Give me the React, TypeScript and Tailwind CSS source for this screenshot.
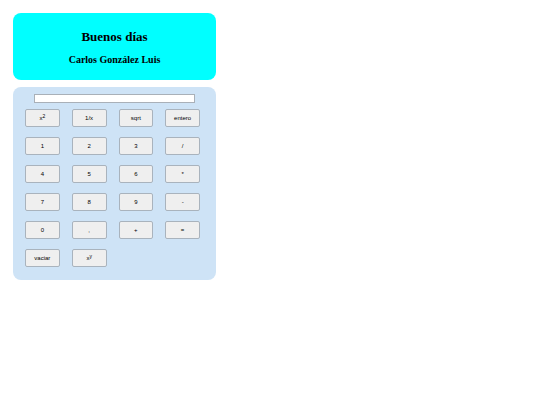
import { useState, type ReactNode } from "react";

type Key = {
  id: string;
  label: ReactNode;
};

const keys: Key[] = [
  { id: "square", label: <>x<sup className="text-[5px]">2</sup></> },
  { id: "inverse", label: "1/x" },
  { id: "sqrt", label: "sqrt" },
  { id: "int", label: "entero" },
  { id: "1", label: "1" },
  { id: "2", label: "2" },
  { id: "3", label: "3" },
  { id: "/", label: "/" },
  { id: "4", label: "4" },
  { id: "5", label: "5" },
  { id: "6", label: "6" },
  { id: "*", label: "*" },
  { id: "7", label: "7" },
  { id: "8", label: "8" },
  { id: "9", label: "9" },
  { id: "-", label: "-" },
  { id: "0", label: "0" },
  { id: ",", label: "," },
  { id: "+", label: "+" },
  { id: "=", label: "=" },
  { id: "clear", label: "vaciar" },
  { id: "power", label: <>x<sup className="text-[5px]">y</sup></> },
];

function calculate(a: number, op: string, b: number) {
  if (op === "+") return a + b;
  if (op === "-") return a - b;
  if (op === "*") return a * b;
  if (op === "/") return a / b;
  return Math.pow(a, b);
}

const toNumber = (text: string) => Number(text.replace(",", "."));
const toText = (value: number) => String(value).replace(".", ",");

function Greeting() {
  return (
    <header className="rounded-lg bg-[#00ffff] pt-4 pb-3.5 text-center font-['Liberation_Serif',serif] font-bold text-black">
      <h1 className="text-[13px] leading-4">Buenos días</h1>
      <h2 className="mt-[9px] text-[10px] leading-3">Carlos González Luis</h2>
    </header>
  );
}

function Calculator() {
  const [display, setDisplay] = useState("");
  const [stored, setStored] = useState(0);
  const [operator, setOperator] = useState("");

  const press = (id: string) => {
    const value = toNumber(display);
    if (/^[0-9]$/.test(id)) setDisplay(display + id);
    else if (id === ",") setDisplay(display.includes(",") ? display : display + ",");
    else if (id === "clear") setDisplay("");
    else if (id === "square") setDisplay(toText(value * value));
    else if (id === "inverse") setDisplay(toText(1 / value));
    else if (id === "sqrt") setDisplay(toText(Math.sqrt(value)));
    else if (id === "int") setDisplay(toText(Math.trunc(value)));
    else if (id === "=") {
      if (operator) setDisplay(toText(calculate(stored, operator, value)));
      setOperator("");
    } else {
      setStored(value);
      setOperator(id);
      setDisplay("");
    }
  };

  return (
    <section className="rounded-lg bg-[#cee3f6] px-3 pt-[7px] pb-[13px] font-['Liberation_Sans',Arial,sans-serif] text-[6px] text-black">
      <input
        type="text"
        aria-label="Pantalla"
        value={display}
        onChange={(e) => setDisplay(e.target.value)}
        className="mx-auto mb-1.5 block h-[9px] w-9/10 border border-[#a9b0b8] bg-white px-px text-right leading-none"
      />
      <div className="mr-1 grid grid-cols-4 gap-x-3 gap-y-2.5">
        {keys.map((key) => (
          <button
            key={key.id}
            type="button"
            onClick={() => press(key.id)}
            className="h-[18px] rounded-[2px] border border-[#a9b3bd] bg-[#efefef] leading-none hover:bg-[#e5e5e5]"
          >
            {key.label}
          </button>
        ))}
      </div>
    </section>
  );
}

export default function App() {
  return (
    <main className="min-h-screen bg-white">
      <div className="mx-[13px] flex w-3/8 min-w-[203px] flex-col gap-[7px] py-[13px]">
        <Greeting />
        <Calculator />
      </div>
    </main>
  );
}
